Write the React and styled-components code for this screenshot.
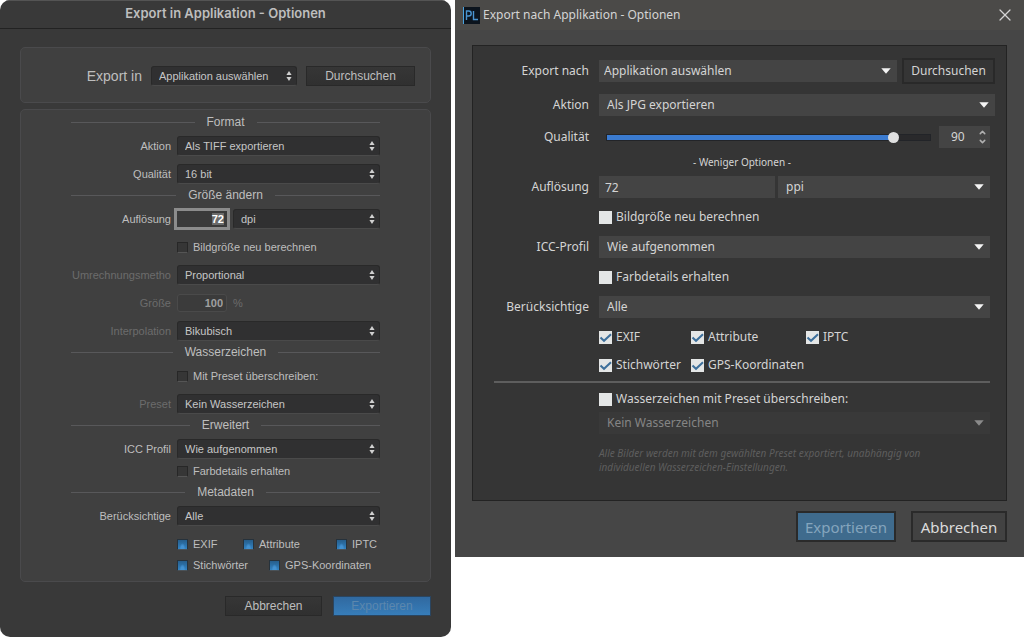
import React, { useEffect, useRef, useState } from 'react';
import styled, { createGlobalStyle, css } from "styled-components";
import { X, ChevronUp, ChevronDown } from "lucide-react";

export default () => {
  return (
    <>
      <GlobalStyle />
      <Page>
        <MacDialog />
        <WinDialog />
      </Page>
    </>
  );
}

const GlobalStyle = createGlobalStyle`
  * {
    box-sizing: border-box;
  }

  body {
    margin: 0;
    background: #fff;
  }

  button, input, select {
    font: inherit;
    color: inherit;
    margin: 0;
  }
`;

const Page = styled.main`
  display: grid;
  grid-template-columns: 451fr 569fr;
  gap: 4px;
  align-items: start;
`;

// ---------- macOS dialog ----------

const MacWindow = styled.section`
  border-radius: 10px;
  background: #393939;
  color: #bebebe;
  font: 11px/14px "Liberation Sans", Arial, sans-serif;
  overflow: hidden;
`;

const MacTitle = styled.h1`
  margin: 0;
  padding: 4px 0 6px;
  border-top: 1px solid #545454;
  border-bottom: 1px solid #222;
  font-family: Inter, "Liberation Sans", sans-serif;
  font-size: 13px;
  line-height: 17px;
  font-weight: 600;
  text-align: center;
`;

const MacBody = styled.form`
  display: flex;
  flex-direction: column;
  padding: 18px 20px 21px;
`;

const MacBox = styled.div`
  border: 1px solid #4a4a4c;
  border-radius: 5px;
  background: #404040;
`;

const MacTarget = styled(MacBox)`
  display: flex;
  align-items: center;
  justify-content: flex-end;
  gap: 9px;
  height: 56px;
  padding: 2px 15px 0 0;
  margin-bottom: 6px;
`;

const MacTargetLabel = styled.label`
  font-size: 14px;
`;

const MacOptions = styled(MacBox)`
  padding: 1px 50px 6px;
`;

const MacHeading = styled.h2`
  display: flex;
  align-items: center;
  gap: 12px;
  height: 22px;
  margin: 0 0 3px;
  font-size: 12px;
  font-weight: 400;

  &::before, &::after {
    content: "";
    flex: 1;
    height: 1px;
    background: #58585a;
  }
`;

const MacGroup = styled.div`
  display: flex;
  flex-direction: column;
  gap: ${p => p.$gap || 8}px;
`;

const MacRow = styled.div`
  display: grid;
  grid-template-columns: 100px 1fr;
  column-gap: 6px;
  align-items: center;
  height: 20px;
`;

const MacLabel = styled.label`
  text-align: right;
  white-space: nowrap;
  color: ${p => p.$dim ? "#6c6c6c" : "inherit"};
`;

const MacControls = styled.div`
  grid-column: 2;
  display: flex;
  align-items: center;
  gap: 6px;
`;

const MacSelectBox = styled.div`
  display: grid;
  align-items: center;
  flex: ${p => p.$width ? "none" : 1};
  width: ${p => p.$width ? p.$width + "px" : "auto"};

  > * {
    grid-area: 1 / 1;
  }

  > svg {
    justify-self: end;
    margin-right: 5px;
    pointer-events: none;
  }
`;

const MacSelectField = styled.select`
  appearance: none;
  width: 100%;
  height: 20px;
  padding: 0 16px 0 7px;
  border: 1px solid #292929;
  border-bottom-color: #4a4a4a;
  border-radius: 3px;
  background: #303031;
  color: #c6c6c6;
  outline: none;
`;

const MacInput = styled.input`
  width: 50px;
  height: 18px;
  padding: 0 3px;
  border: 1px solid #4a4a4a;
  border-radius: 3px;
  background: #3b3b3b;
  color: #a0a0a0;
  font-weight: 600;
  text-align: right;
  outline: none;

  ${p => p.$active && css`
    height: 16px;
    border: 0;
    border-radius: 0;
    background: #3a3a3a;
    color: #fff;
    outline: 3px solid #8c8c8c;

    &::selection {
      background: #6a6a6a;
      color: #fff;
    }
  `}
`;

const MacUnit = styled.span`
  color: #6c6c6c;
`;

const MacCheckLabel = styled.label`
  display: flex;
  align-items: center;
  gap: 5px;
  white-space: nowrap;
`;

const MacCheckbox = styled.input`
  appearance: none;
  width: 11px;
  height: 11px;
  border: 1px solid #272727;
  border-bottom-color: #555;
  background: #363636;

  &:checked {
    border-color: #26323c #26323c #4a5258;
    background: radial-gradient(ellipse at 50% 100%, #4391d0 0 24%, transparent 46%), linear-gradient(#265e8c, #3384c4);
  }
`;

const MacChecks = styled.div`
  grid-column: 2;
  display: grid;
  grid-template-columns: ${p => p.$cols};
`;

const MacFooter = styled.div`
  display: flex;
  justify-content: flex-end;
  gap: 11px;
  margin-top: 14px;
`;

const MacButton = styled.button`
  width: ${p => p.$width}px;
  height: 20px;
  padding: 0;
  border: 1px solid #292929;
  background: linear-gradient(#363636, #303030);
  font-size: 12px;
  line-height: 16px;

  ${p => p.$primary && css`
    border-color: #2a4560;
    background: linear-gradient(#3069a0, #377db9);
    color: #5c87ad;
  `}
`;

const MacSelect = ({ id, width, label, children }) => (
  <MacSelectBox $width={width}>
    <MacSelectField id={id} aria-label={label}>
      <option>{children}</option>
    </MacSelectField>
    <svg width="6" height="10" viewBox="0 0 6 10" fill="#d0d0d0">
      <path d="M3 0 5.6 4H.4zM3 10 5.6 6H.4z" />
    </svg>
  </MacSelectBox>
);

const MacField = ({ id, label, dim, children }) => (
  <MacRow>
    <MacLabel htmlFor={id} $dim={dim}>{label}</MacLabel>
    <MacControls>{children}</MacControls>
  </MacRow>
);

const MacCheck = ({ checked, children }) => (
  <MacCheckLabel>
    <MacCheckbox type="checkbox" defaultChecked={checked} />
    {children}
  </MacCheckLabel>
);

const MacDialog = () => {
  const resolution = useRef(null);

  useEffect(() => {
    resolution.current.focus();
    resolution.current.select();
  }, []);

  return (
    <MacWindow>
      <MacTitle>Export in Applikation - Optionen</MacTitle>
      <MacBody>
        <MacTarget>
          <MacTargetLabel htmlFor="mac-app">Export in</MacTargetLabel>
          <MacSelect id="mac-app" width={146}>Applikation auswählen</MacSelect>
          <MacButton type="button" $width={109}>Durchsuchen</MacButton>
        </MacTarget>
        <MacOptions>
          <MacHeading>Format</MacHeading>
          <MacGroup>
            <MacField id="mac-action" label="Aktion">
              <MacSelect id="mac-action">Als TIFF exportieren</MacSelect>
            </MacField>
            <MacField id="mac-quality" label="Qualität">
              <MacSelect id="mac-quality">16 bit</MacSelect>
            </MacField>
          </MacGroup>
          <MacHeading>Größe ändern</MacHeading>
          <MacGroup>
            <MacField id="mac-res" label="Auflösung">
              <MacInput id="mac-res" ref={resolution} defaultValue="72" $active />
              <MacSelect label="Einheit">dpi</MacSelect>
            </MacField>
            <MacRow>
              <MacControls><MacCheck>Bildgröße neu berechnen</MacCheck></MacControls>
            </MacRow>
            <MacField id="mac-method" label="Umrechnungsmetho" dim>
              <MacSelect id="mac-method">Proportional</MacSelect>
            </MacField>
            <MacField id="mac-size" label="Größe" dim>
              <MacInput id="mac-size" defaultValue="100" />
              <MacUnit>%</MacUnit>
            </MacField>
            <MacField id="mac-interp" label="Interpolation" dim>
              <MacSelect id="mac-interp">Bikubisch</MacSelect>
            </MacField>
          </MacGroup>
          <MacHeading>Wasserzeichen</MacHeading>
          <MacGroup>
            <MacRow>
              <MacControls><MacCheck>Mit Preset überschreiben:</MacCheck></MacControls>
            </MacRow>
            <MacField id="mac-preset" label="Preset" dim>
              <MacSelect id="mac-preset">Kein Wasserzeichen</MacSelect>
            </MacField>
          </MacGroup>
          <MacHeading>Erweitert</MacHeading>
          <MacGroup $gap={2}>
            <MacField id="mac-icc" label="ICC Profil">
              <MacSelect id="mac-icc">Wie aufgenommen</MacSelect>
            </MacField>
            <MacRow>
              <MacControls><MacCheck>Farbdetails erhalten</MacCheck></MacControls>
            </MacRow>
          </MacGroup>
          <MacHeading>Metadaten</MacHeading>
          <MacGroup>
            <MacField id="mac-meta" label="Berücksichtige">
              <MacSelect id="mac-meta">Alle</MacSelect>
            </MacField>
            <MacGroup $gap={1}>
              <MacRow>
                <MacChecks $cols="66px 93px 1fr">
                  <MacCheck checked>EXIF</MacCheck>
                  <MacCheck checked>Attribute</MacCheck>
                  <MacCheck checked>IPTC</MacCheck>
                </MacChecks>
              </MacRow>
              <MacRow>
                <MacChecks $cols="92px 1fr">
                  <MacCheck checked>Stichwörter</MacCheck>
                  <MacCheck checked>GPS-Koordinaten</MacCheck>
                </MacChecks>
              </MacRow>
            </MacGroup>
          </MacGroup>
        </MacOptions>
        <MacFooter>
          <MacButton type="button" $width={97}>Abbrechen</MacButton>
          <MacButton type="button" $width={98} $primary>Exportieren</MacButton>
        </MacFooter>
      </MacBody>
    </MacWindow>
  );
}

// ---------- Windows dialog ----------

const WinWindow = styled.section`
  background: #464646;
  color: #d4d4d4;
  font: 12px/16px "Noto Sans", "Open Sans", sans-serif;
`;

const WinTitleBar = styled.header`
  display: flex;
  align-items: center;
  gap: 3px;
  height: 30px;
  padding: 0 9px 0 8px;
  background: #4b4a48;
`;

const WinTitle = styled.h1`
  flex: 1;
  margin: 0;
  font-size: 12px;
  font-weight: 400;
`;

const WinClose = styled.button`
  display: flex;
  padding: 0;
  border: 0;
  background: none;
`;

const WinBody = styled.form`
  padding: 15px 17px;
`;

const WinPanel = styled.div`
  padding: 12px 11px 26px 21px;
  border: 1px solid #232323;
  background: #353535;
`;

const WinStack = styled.div`
  display: flex;
  flex-direction: column;
  gap: ${p => p.$gap}px;
`;

const WinInset = styled.div`
  padding: 10px 5px 0 0;
`;

const WinRow = styled.div`
  display: grid;
  grid-template-columns: 95px 1fr;
  column-gap: 10px;
  align-items: center;
  min-height: 22px;
`;

const WinLabel = styled.label`
  text-align: right;
  white-space: nowrap;
`;

const WinControls = styled.div`
  grid-column: 2;
  display: flex;
  align-items: center;
  gap: ${p => p.$gap || 0}px;
`;

const WinSelectBox = styled.div`
  display: grid;
  align-items: center;
  flex: 1;

  > * {
    grid-area: 1 / 1;
  }

  > svg {
    justify-self: end;
    margin-right: 6px;
    pointer-events: none;
  }
`;

const WinSelectField = styled.select`
  appearance: none;
  width: 100%;
  height: 22px;
  padding: 0 20px 0 ${p => p.$tight ? 5 : 8}px;
  border: 0;
  border-radius: 0;
  background: #444;
  outline: none;

  &:disabled {
    background: #393939;
    color: #858585;
    opacity: 1;
  }
`;

const WinInput = styled.input`
  width: 176px;
  height: 22px;
  padding: 0 6px;
  border: 0;
  background: #444;
  outline: none;
`;

const WinButton = styled.button`
  height: 26px;
  width: 93px;
  padding: 0;
  border: 2px solid #292929;
  background: #353535;
`;

const WinRange = styled.input`
  appearance: none;
  flex: 1;
  min-width: 0;
  height: 12px;
  margin-left: 7px;
  background: none;
  outline: none;

  &::-webkit-slider-runnable-track {
    height: 7px;
    border: 1px solid #222428;
    background: linear-gradient(90deg, #3b7bd0 var(--fill), #29292b var(--fill));
  }

  &::-webkit-slider-thumb {
    appearance: none;
    width: 11px;
    height: 11px;
    margin-top: -3px;
    border-radius: 50%;
    background: #e0e0e0;
  }
`;

const WinSpin = styled.div`
  display: flex;
  align-items: center;
  width: 51px;
  height: 22px;
  padding-right: 3px;
  background: #444;
`;

const WinNumber = styled.input`
  appearance: textfield;
  flex: 1;
  min-width: 0;
  padding: 0 0 0 12px;
  border: 0;
  background: none;
  outline: none;

  &::-webkit-inner-spin-button {
    display: none;
  }
`;

const WinSpinButtons = styled.div`
  display: flex;
  flex-direction: column;
  color: #b0b0b0;

  button {
    display: flex;
    padding: 0;
    border: 0;
    background: none;
  }
`;

const WinToggle = styled.button`
  display: block;
  width: 100%;
  height: 28px;
  padding: 0;
  border: 0;
  background: none;
  font-size: 10px;
  line-height: 14px;
`;

const WinCheckLabel = styled.label`
  display: flex;
  align-items: center;
  gap: 4px;
  white-space: nowrap;
`;

const WinCheckBox = styled.span`
  display: grid;

  > * {
    grid-area: 1 / 1;
  }

  > svg {
    pointer-events: none;
  }

  input:not(:checked) + svg {
    visibility: hidden;
  }
`;

const WinCheckInput = styled.input`
  appearance: none;
  width: 13px;
  height: 13px;
  background: #e4e6e6;
`;

const WinChecks = styled.div`
  grid-column: 2;
  display: grid;
  grid-template-columns: 92px 115px 1fr;
`;

const WinRule = styled.hr`
  height: 2px;
  margin: 5px 0;
  border: 0;
  background: #5e5e5e;
`;

const WinNote = styled.p`
  max-width: 350px;
  margin: 12px 0 0 105px;
  color: #5e5e5e;
  font-size: 10px;
  line-height: 14px;
  font-style: italic;
`;

const WinFooter = styled.div`
  display: flex;
  justify-content: flex-end;
  gap: 15px;
  margin-top: 10px;
`;

const WinFooterButton = styled.button`
  width: ${p => p.$primary ? 100 : 96}px;
  height: 31px;
  padding: 0;
  border: 2px solid #2a2a2a;
  background: ${p => p.$primary ? "#3f6b8d" : "#424242"};
  color: ${p => p.$primary ? "#85a5bd" : "#dcdcdc"};
  font-size: 15px;
  line-height: 20px;
`;

const Logo = () => (
  <svg width="17" height="17" viewBox="0 0 17 17" aria-hidden="true">
    <rect width="17" height="17" fill="#0c141d" />
    <rect width="1" height="17" fill="#4aa3df" />
    <path d="M3.5 13V4h2.2a2.4 2.4 0 0 1 0 5H3.5M10.5 4v8.500h4.500" fill="none" stroke="#4a94cf" strokeWidth="1.400" />
  </svg>
);

const WinSelect = ({ id, label, disabled, tight, children }) => (
  <WinSelectBox>
    <WinSelectField id={id} aria-label={label} disabled={disabled} $tight={tight}>
      <option>{children}</option>
    </WinSelectField>
    <svg width="10" height="6" viewBox="0 0 10 6" fill={disabled ? "#8a8a8a" : "#f4f4f4"}>
      <path d="M.3.3h9.400L5 5.800z" />
    </svg>
  </WinSelectBox>
);

const WinField = ({ id, label, gap, children }) => (
  <WinRow>
    <WinLabel htmlFor={id}>{label}</WinLabel>
    <WinControls $gap={gap}>{children}</WinControls>
  </WinRow>
);

const WinCheck = ({ checked, children }) => (
  <WinCheckLabel>
    <WinCheckBox>
      <WinCheckInput type="checkbox" defaultChecked={checked} />
      <svg width="13" height="13" viewBox="0 0 13 13" fill="none" stroke="#3d6f9b" strokeWidth="2">
        <path d="M1.500 6.500 5 9.800 12 3.200" />
      </svg>
    </WinCheckBox>
    {children}
  </WinCheckLabel>
);

const WinDialog = () => {
  const [quality, setQuality] = useState(90);

  return (
    <WinWindow>
      <WinTitleBar>
        <Logo />
        <WinTitle>Export nach Applikation - Optionen</WinTitle>
        <WinClose type="button" aria-label="Schließen"><X size={20} strokeWidth={1.5} /></WinClose>
      </WinTitleBar>
      <WinBody>
        <WinPanel>
          <WinStack $gap={10}>
            <WinField id="win-app" label="Export nach" gap={5}>
              <WinSelect id="win-app" tight>Applikation auswählen</WinSelect>
              <WinButton type="button">Durchsuchen</WinButton>
            </WinField>
            <WinField id="win-action" label="Aktion">
              <WinSelect id="win-action">Als JPG exportieren</WinSelect>
            </WinField>
          </WinStack>
          <WinInset>
            <WinField id="win-quality" label="Qualität" gap={8}>
              <WinRange
                id="win-quality"
                type="range"
                value={quality}
                onChange={e => setQuality(Number(e.target.value))}
                style={{ "--fill": quality + "%" }}
              />
              <WinSpin>
                <WinNumber
                  type="number"
                  aria-label="Qualität in Prozent"
                  value={quality}
                  onChange={e => setQuality(Number(e.target.value))}
                />
                <WinSpinButtons>
                  <button type="button" aria-label="Mehr" onClick={() => setQuality(Math.min(100, quality + 1))}>
                    <ChevronUp size={9} strokeWidth={4} />
                  </button>
                  <button type="button" aria-label="Weniger" onClick={() => setQuality(Math.max(0, quality - 1))}>
                    <ChevronDown size={9} strokeWidth={4} />
                  </button>
                </WinSpinButtons>
              </WinSpin>
            </WinField>
            <WinToggle type="button">- Weniger Optionen -</WinToggle>
            <WinStack $gap={8}>
              <WinField id="win-res" label="Auflösung" gap={3}>
                <WinInput id="win-res" defaultValue="72" />
                <WinSelect label="Einheit">ppi</WinSelect>
              </WinField>
              <WinRow>
                <WinControls><WinCheck>Bildgröße neu berechnen</WinCheck></WinControls>
              </WinRow>
              <WinField id="win-icc" label="ICC-Profil">
                <WinSelect id="win-icc">Wie aufgenommen</WinSelect>
              </WinField>
              <WinRow>
                <WinControls><WinCheck>Farbdetails erhalten</WinCheck></WinControls>
              </WinRow>
              <WinField id="win-meta" label="Berücksichtige">
                <WinSelect id="win-meta">Alle</WinSelect>
              </WinField>
              <WinStack $gap={6}>
                <WinRow>
                  <WinChecks>
                    <WinCheck checked>EXIF</WinCheck>
                    <WinCheck checked>Attribute</WinCheck>
                    <WinCheck checked>IPTC</WinCheck>
                  </WinChecks>
                </WinRow>
                <WinRow>
                  <WinChecks>
                    <WinCheck checked>Stichwörter</WinCheck>
                    <WinCheck checked>GPS-Koordinaten</WinCheck>
                  </WinChecks>
                </WinRow>
              </WinStack>
            </WinStack>
            <WinRule />
            <WinStack $gap={2}>
              <WinRow>
                <WinControls><WinCheck>Wasserzeichen mit Preset überschreiben:</WinCheck></WinControls>
              </WinRow>
              <WinRow>
                <WinControls>
                  <WinSelect label="Wasserzeichen" disabled>Kein Wasserzeichen</WinSelect>
                </WinControls>
              </WinRow>
            </WinStack>
            <WinNote>
              Alle Bilder werden mit dem gewählten Preset exportiert, unabhängig von individuellen
              Wasserzeichen-Einstellungen.
            </WinNote>
          </WinInset>
        </WinPanel>
        <WinFooter>
          <WinFooterButton type="button" $primary>Exportieren</WinFooterButton>
          <WinFooterButton type="button">Abbrechen</WinFooterButton>
        </WinFooter>
      </WinBody>
    </WinWindow>
  );
}
